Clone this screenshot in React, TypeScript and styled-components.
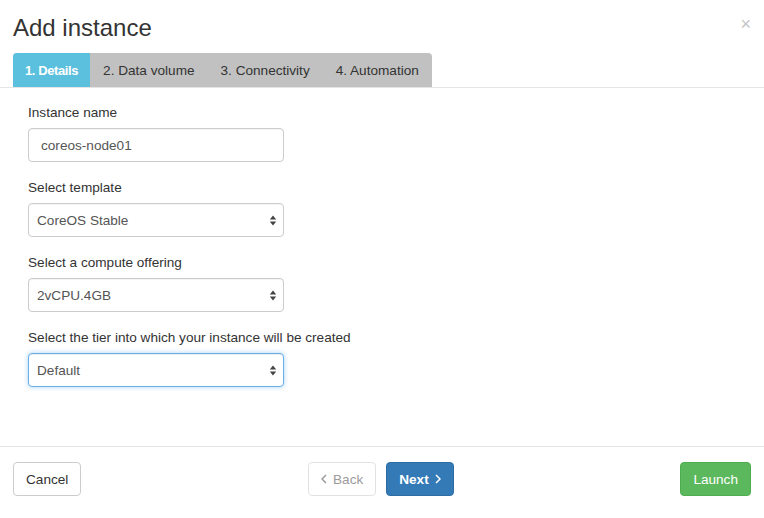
import React, { useState } from 'react'
import styled, { createGlobalStyle, css } from 'styled-components'

const GlobalStyle = createGlobalStyle`
    html, body {
        margin : 0;
        padding : 0;
        background : #fff;
    }
    body {
        font-family : 'Liberation Sans', Arial, sans-serif;
        color : #333;
    }
    * { box-sizing : border-box; }
`

const Modal = styled.div`
    width : 764px;
    min-height : 518px;
    display : flex;
    flex-direction : column;
    background : #fff;
`

const Header = styled.header`
    position : relative;
    padding : 15px 13px 0;
    border-bottom : 1px solid #e5e5e5;

    .title {
        margin : 0 0 12px;
        font-size : 24px;
        line-height : 26px;
        font-weight : 400;
        color : #333;
    }

    .close {
        position : absolute;
        top : 14px;
        right : 13px;
        border : 0;
        background : none;
        padding : 0;
        font-size : 18px;
        line-height : 20px;
        color : #c4c4c4;
        cursor : pointer;
        font-family : inherit;
    }
`

const Tabs = styled.nav`
    display : inline-flex;
    background : #c1c1c1;
    border-radius : 4px 4px 0 0;
    overflow : hidden;
    height : 34px;
`

const Tab = styled.button<{ $active? : boolean }>`
    border : 0;
    margin : 0;
    padding : 0 13px 0 13px;
    font-family : inherit;
    font-size : 13.6px;
    color : #333;
    background : transparent;
    cursor : pointer;
    ${({ $active }) => $active && css`
        padding : 0 12px;
        background : #5bc0de;
        color : #fff;
        font-weight : 700;
        font-size : 13px;
        letter-spacing : -0.4px;
    `}
`

const Body = styled.main`
    flex : 1;
    padding : 16px 28px;
`

const Group = styled.div`
    display : flex;
    flex-direction : column;
    margin-bottom : 17px;

    label {
        font-size : 13.6px;
        line-height : 18px;
        margin-bottom : 6px;
    }
`

const fieldStyle = css`
    width : 256px;
    height : 34px;
    border : 1px solid #ccc;
    border-radius : 4px;
    font-family : inherit;
    font-size : 13.6px;
    color : #555;
    background : #fff;
    outline : none;
    box-shadow : inset 0 1px 1px rgba(0, 0, 0, 0.05);
`

const TextInput = styled.input`
    ${fieldStyle};
    padding : 0 12px;
`

const SelectWrap = styled.div`
    position : relative;
    width : 256px;

    svg {
        position : absolute;
        right : 7px;
        top : 12px;
        pointer-events : none;
    }
`

const Select = styled.select<{ $focus? : boolean }>`
    ${fieldStyle};
    appearance : none;
    padding : 0 20px 0 8px;
    ${({ $focus }) => $focus && css`
        border-color : #66afe9;
        box-shadow : inset 0 1px 1px rgba(0, 0, 0, 0.075), 0 0 5px rgba(102, 175, 233, 0.55);
    `}
`

const Footer = styled.footer`
    display : flex;
    align-items : center;
    justify-content : space-between;
    padding : 15px 13px 22px;
    border-top : 1px solid #e5e5e5;

    .pager {
        display : flex;
        gap : 10px;
    }
`

type Variant = 'default' | 'primary' | 'success'

const variants = {
    default : css`background : #fff; color : #333; border-color : #ccc;`,
    primary : css`background : #337ab7; color : #fff; border-color : #2e6da4; font-weight : 700;`,
    success : css`background : #5cb85c; color : #fff; border-color : #4cae4c;`,
}

const Button = styled.button<{ $variant? : Variant }>`
    display : inline-flex;
    align-items : center;
    gap : 6px;
    height : 34px;
    padding : 0 12px;
    border : 1px solid;
    border-radius : 4px;
    font-family : inherit;
    font-size : 13.6px;
    cursor : pointer;
    ${({ $variant = 'default' }) => variants[$variant]}
    &:disabled {
        cursor : not-allowed;
        opacity : 0.65;
        color : #666;
        border-color : #d4d4d4;
    }
`

const Arrows = () => (
    <svg width="8" height="11" viewBox="0 0 8 11">
        <path d="M4 0.5 L7.2 4.5 H0.8 Z M4 10.5 L7.2 6.5 H0.8 Z" fill="#444" />
    </svg>
)

const Chevron = ({ dir } : { dir : 'left' | 'right' }) => (
    <svg width="6" height="10" viewBox="0 0 6 10">
        <path d={dir === 'left' ? 'M5 1 L1 5 L5 9' : 'M1 1 L5 5 L1 9'} fill="none" stroke="currentColor" strokeWidth="1.5" />
    </svg>
)

const tabs = ['1. Details', '2. Data volume', '3. Connectivity', '4. Automation']

const App = () => {
    const [active, setActive] = useState<number>(0)
    const [name, setName] = useState<string>('coreos-node01')

    return (
        <Modal>
            <GlobalStyle />
            <Header>
                <h1 className="title">Add instance</h1>
                <button className="close" aria-label="Close">×</button>
                <Tabs>
                    {tabs.map((t, i) => (
                        <Tab key={t} $active={i === active} onClick={() => setActive(i)}>{t}</Tab>
                    ))}
                </Tabs>
            </Header>
            <Body>
                <Group>
                    <label>Instance name</label>
                    <TextInput value={name} onChange={e => setName(e.target.value)} />
                </Group>
                <Group>
                    <label>Select template</label>
                    <SelectWrap>
                        <Select defaultValue="CoreOS Stable">
                            <option>CoreOS Stable</option>
                        </Select>
                        <Arrows />
                    </SelectWrap>
                </Group>
                <Group>
                    <label>Select a compute offering</label>
                    <SelectWrap>
                        <Select defaultValue="2vCPU.4GB">
                            <option>2vCPU.4GB</option>
                        </Select>
                        <Arrows />
                    </SelectWrap>
                </Group>
                <Group>
                    <label>Select the tier into which your instance will be created</label>
                    <SelectWrap>
                        <Select $focus defaultValue="Default">
                            <option>Default</option>
                        </Select>
                        <Arrows />
                    </SelectWrap>
                </Group>
            </Body>
            <Footer>
                <Button>Cancel</Button>
                <div className="pager">
                    <Button disabled><Chevron dir="left" />Back</Button>
                    <Button $variant="primary">Next<Chevron dir="right" /></Button>
                </div>
                <Button $variant="success">Launch</Button>
            </Footer>
        </Modal>
    )
}

export default App
